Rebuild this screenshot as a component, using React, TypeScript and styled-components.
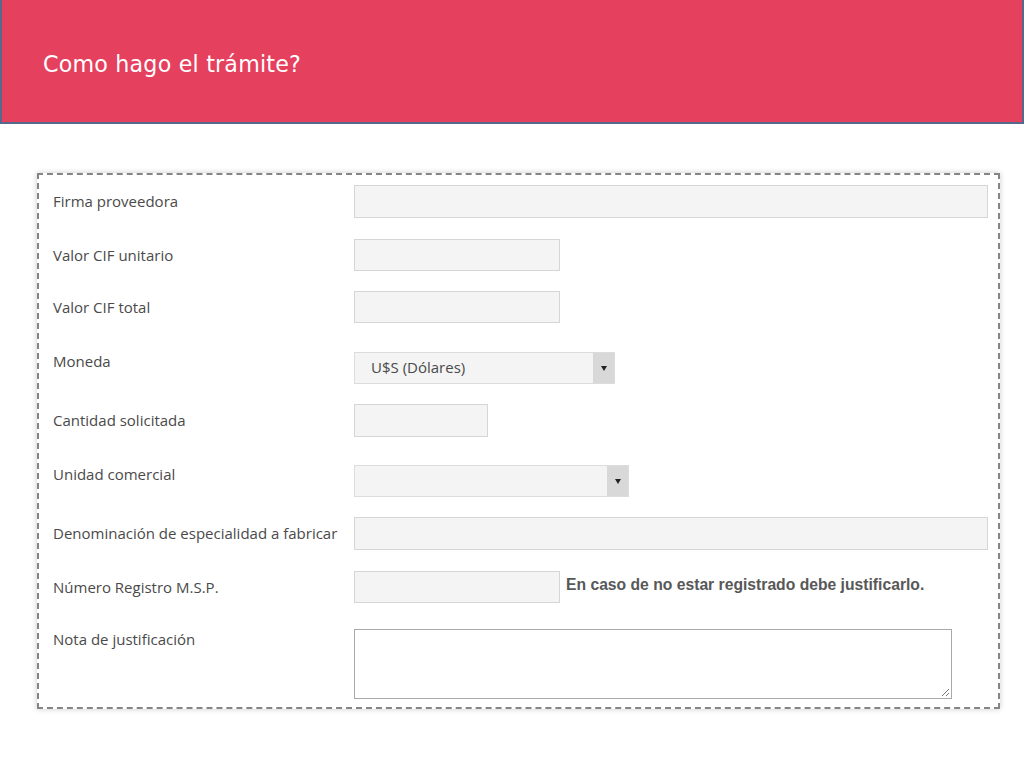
import React from 'react';
import styled, { createGlobalStyle } from 'styled-components';

const GlobalStyle = createGlobalStyle`
  body {
    margin: 0;
    background: #ffffff;
    font-family: "Open Sans", "DejaVu Sans", sans-serif;
  }
`;

const Page = styled.div`
  width: 1024px;
  height: 768px;
  overflow: hidden;
`;

const Header = styled.header`
  height: 122px;
  background: #e5405e;
  border: 2px solid #56688c;
  border-top: none;
  box-sizing: content-box;
  width: 1020px;
  display: flex;
  align-items: center;
`;

const Title = styled.h1`
  margin: 0 0 0 41px;
  padding-top: 5px;
  font-family: "DejaVu Sans", sans-serif;
  font-weight: normal;
  font-size: 22.2px;
  letter-spacing: 0.2px;
  color: #ffffff;
`;

const Panel = styled.section`
  margin: 49px 0 0 37px;
  width: 945px;
  border: 2px dashed #858585;
  box-shadow: 0 0 6px rgba(0, 0, 0, 0.2);
  padding: 10px 0 8px 14px;
  box-sizing: content-box;
`;

const Row = styled.div<{ $gap: number }>`
  display: flex;
  align-items: flex-start;
  margin-top: ${(p) => p.$gap}px;
`;

const Label = styled.div<{ $top: number }>`
  width: 301px;
  flex-shrink: 0;
  padding-top: ${(p) => p.$top}px;
  font-size: 15px;
  color: #4a4a4a;
  line-height: 18px;
  white-space: nowrap;
`;

const TextInput = styled.div<{ $w: number; $h?: number }>`
  width: ${(p) => p.$w}px;
  height: ${(p) => p.$h ?? 32}px;
  flex-shrink: 0;
  box-sizing: border-box;
  background: #f4f4f4;
  border: 1px solid #d6d6d6;
`;

const Select = styled.div<{ $w: number }>`
  width: ${(p) => p.$w}px;
  height: 32px;
  box-sizing: border-box;
  display: flex;
  background: #f4f4f4;
  border: 1px solid #dcdcdc;
`;

const SelectValue = styled.div`
  flex: 1;
  padding-left: 16px;
  font-size: 15px;
  line-height: 28px;
  color: #4a4a4a;
`;

const Arrow = styled.div`
  width: 21px;
  background: #d8d8d8;
  display: flex;
  align-items: center;
  justify-content: center;
  &::after {
    content: '';
    border-left: 3px solid transparent;
    border-right: 3px solid transparent;
    border-top: 5px solid #222;
  }
`;

const Note = styled.div`
  margin-left: 6px;
  padding-top: 5px;
  font-family: "Liberation Sans", Arial, sans-serif;
  font-weight: bold;
  font-size: 15.7px;
  color: #585858;
  white-space: nowrap;
`;

const TextArea = styled.div`
  position: relative;
  width: 598px;
  height: 70px;
  box-sizing: border-box;
  background: #ffffff;
  border: 1px solid #a9a9a9;
`;

const Grip = styled.svg`
  position: absolute;
  right: 1px;
  bottom: 1px;
`;

const App = () => {
  return (
    <Page>
      <GlobalStyle />
      <Header>
        <Title>Como hago el trámite?</Title>
      </Header>
      <Panel>
        <Row $gap={0}>
          <Label $top={7}>Firma proveedora</Label>
          <TextInput $w={634} $h={33} />
        </Row>
        <Row $gap={21}>
          <Label $top={7}>Valor CIF unitario</Label>
          <TextInput $w={206} />
        </Row>
        <Row $gap={20}>
          <Label $top={7}>Valor CIF total</Label>
          <TextInput $w={206} />
        </Row>
        <Row $gap={29}>
          <Label $top={0}>Moneda</Label>
          <Select $w={261}>
            <SelectValue>U$S (Dólares)</SelectValue>
            <Arrow />
          </Select>
        </Row>
        <Row $gap={20}>
          <Label $top={7}>Cantidad solicitada</Label>
          <TextInput $w={134} $h={33} />
        </Row>
        <Row $gap={28}>
          <Label $top={0}>Unidad comercial</Label>
          <Select $w={275}>
            <SelectValue />
            <Arrow />
          </Select>
        </Row>
        <Row $gap={20}>
          <Label $top={7}>Denominación de especialidad a fabricar</Label>
          <TextInput $w={634} $h={33} />
        </Row>
        <Row $gap={21}>
          <Label $top={7}>Número Registro M.S.P.</Label>
          <TextInput $w={206} />
          <Note>En caso de no estar registrado debe justificarlo.</Note>
        </Row>
        <Row $gap={26}>
          <Label $top={1}>Nota de justificación</Label>
          <TextArea>
            <Grip width="10" height="10" viewBox="0 0 10 10">
              <path d="M9 2 L2 9 M9 6 L6 9" stroke="#777" strokeWidth="1" />
            </Grip>
          </TextArea>
        </Row>
      </Panel>
    </Page>
  );
};

export default App;
